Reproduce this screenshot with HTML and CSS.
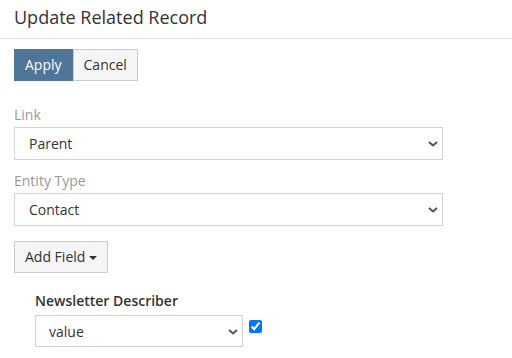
FILE: index.html
```html
<!DOCTYPE html>
<html lang="en">
<head>
  <meta charset="UTF-8" />
  <title>Update Related Record</title>
  <link rel="stylesheet" href="styles.css">
</head>
<body>
  <header class="modal-header">Update Related Record</header>

  <div class="modal-body">
    <div class="btn-group">
      <button class="btn btn-primary">Apply</button>
      <button class="btn btn-default">Cancel</button>
    </div>

    <div class="form-group">
      <label class="field-label">Link</label>
      <div class="select-wrap">
        <select class="form-control"><option>Parent</option></select>
        <svg class="caret" viewBox="0 0 10 6" width="10" height="6"><path d="M1 1 L5 4.5 L9 1" fill="none" stroke="#555" stroke-width="2"/></svg>
      </div>
    </div>

    <div class="form-group">
      <label class="field-label">Entity Type</label>
      <div class="select-wrap">
        <select class="form-control"><option>Contact</option></select>
        <svg class="caret" viewBox="0 0 10 6" width="10" height="6"><path d="M1 1 L5 4.5 L9 1" fill="none" stroke="#555" stroke-width="2"/></svg>
      </div>
    </div>

    <button class="btn btn-default add-field">Add Field <span class="dropdown-caret"></span></button>

    <div class="field-list">
      <label class="field-name">Newsletter Describer</label>
      <div class="field-row">
        <div class="select-wrap small">
          <select class="form-control"><option>value</option></select>
          <svg class="caret" viewBox="0 0 10 6" width="10" height="6"><path d="M1 1 L5 4.5 L9 1" fill="none" stroke="#555" stroke-width="2"/></svg>
        </div>
        <input type="checkbox" class="field-check" checked>
      </div>
    </div>
  </div>
</body>
</html>
```

FILE: styles.css
```css
* {
  box-sizing: border-box;
}

body {
  margin: 0;
  font-family: 'Open Sans', sans-serif;
  font-size: 14px;
  color: #333;
  background: #fff;
}

.modal-header {
  font-size: 18px;
  line-height: 25px;
  padding: 5px 14px 8px;
  border-bottom: 1px solid #e5e5e5;
}

.modal-body {
  padding: 10px 14px;
}

.btn-group {
  display: flex;
  margin-bottom: 24px;
}

.btn {
  font-family: inherit;
  font-size: 14px;
  line-height: 20px;
  padding: 5px 10px;
  border: 1px solid #ccc;
  background: #f5f5f5;
  color: #333;
  cursor: pointer;
}

.btn-primary {
  background: #4f7599;
  border-color: #4f7599;
  color: #fff;
}

.form-group {
  margin-bottom: 11px;
}

.field-label {
  display: block;
  color: #999;
  line-height: 20px;
  margin-bottom: 2px;
}

.select-wrap {
  position: relative;
  width: 429px;
}

.select-wrap.small {
  width: 208px;
}

.form-control {
  display: block;
  width: 100%;
  height: 33px;
  padding: 0 30px 0 14px;
  font-family: inherit;
  font-size: 14px;
  color: #333;
  background: #fff;
  border: 1px solid #d2d2d2;
  border-radius: 0;
  appearance: none;
  -webkit-appearance: none;
}

.caret {
  position: absolute;
  right: 5px;
  top: 14px;
}

.add-field {
  margin-top: 4px;
}

.dropdown-caret {
  display: inline-block;
  width: 0;
  height: 0;
  margin-left: 0;
  vertical-align: middle;
  border-top: 4px solid #333;
  border-left: 4px solid transparent;
  border-right: 4px solid transparent;
}

.field-list {
  padding-left: 21px;
  margin-top: 18px;
}

.field-name {
  display: block;
  font-weight: 600;
  line-height: 20px;
  margin-bottom: 4px;
}

.field-row {
  display: flex;
  align-items: flex-start;
}

.field-row .form-control {
  height: 32px;
  padding-left: 13px;
}

.field-check {
  width: 13px;
  height: 13px;
  margin: 5px 0 0 6px;
}
```
